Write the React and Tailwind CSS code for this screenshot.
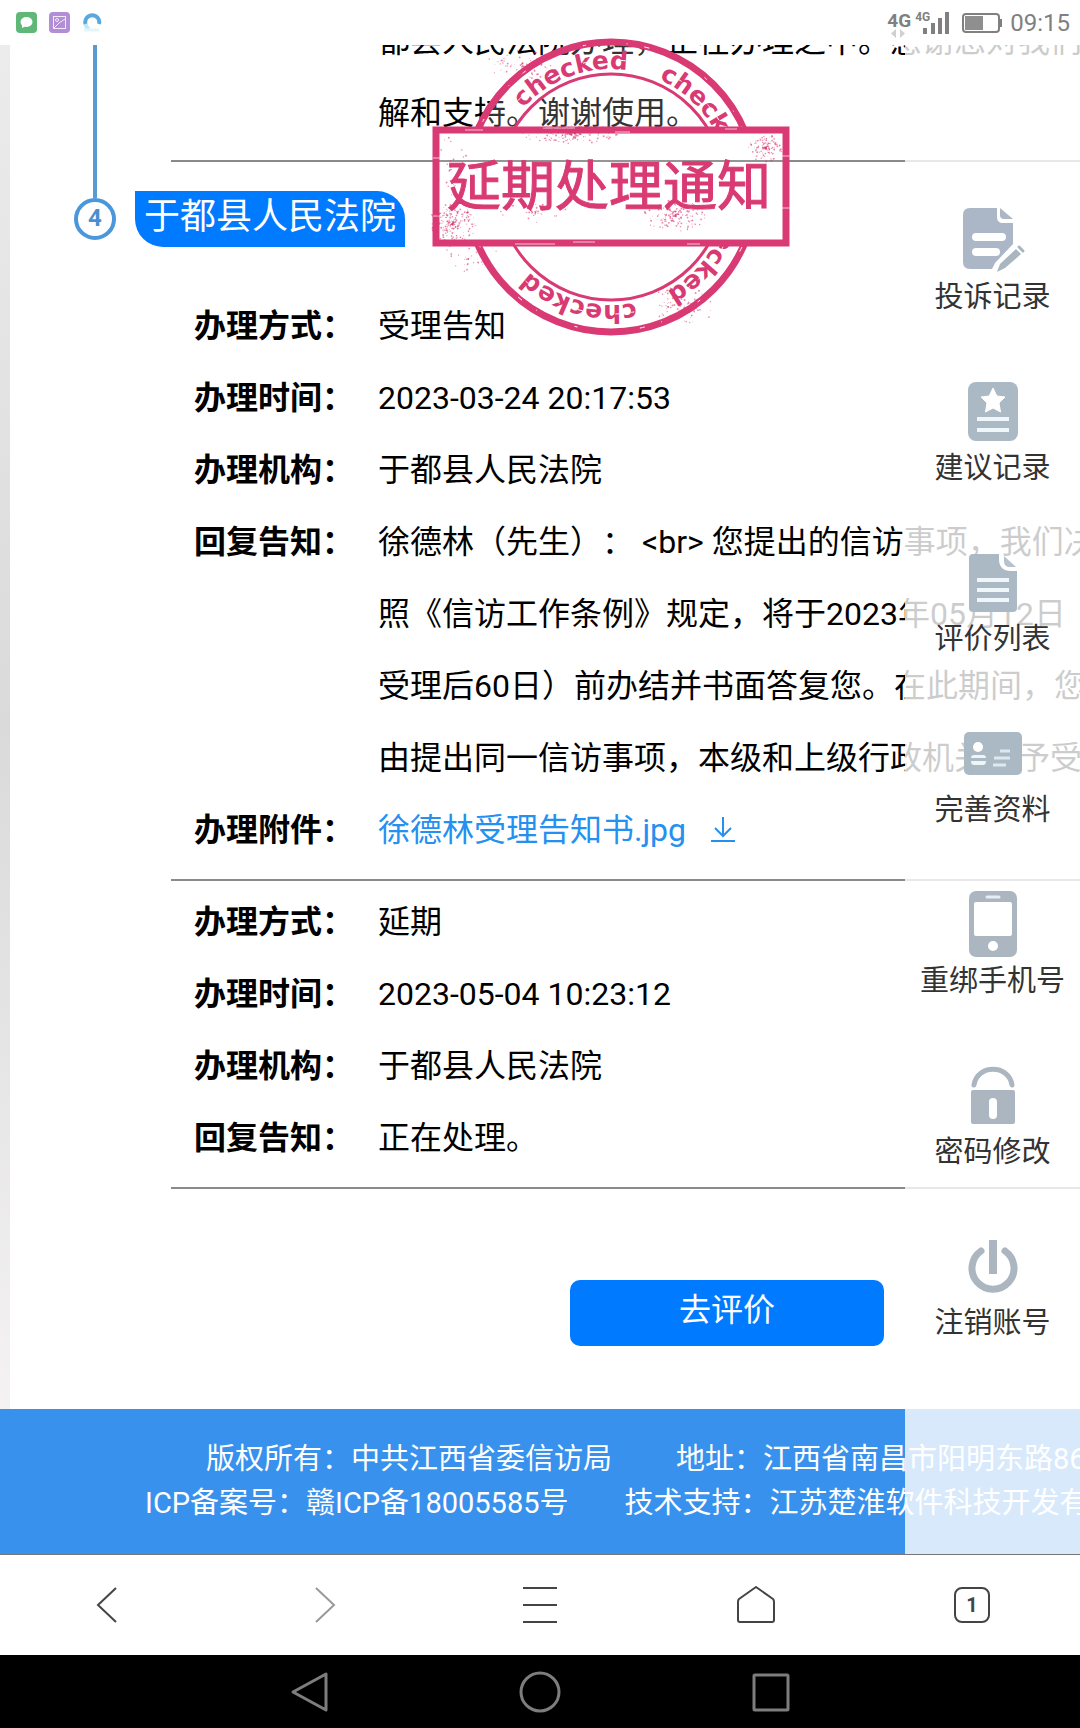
const previousReply = ["都县人民法院办理，正在办理之中。感谢您对我们", "解和支持。谢谢使用。"];

const records = [
  {
    id: "accept",
    method: "受理告知",
    time: "2023-03-24 20:17:53",
    org: "于都县人民法院",
    reply: [
      "徐德林（先生）： <br> 您提出的信访事项，我们决",
      "照《信访工作条例》规定，将于2023年05月12日",
      "受理后60日）前办结并书面答复您。在此期间，您",
      "由提出同一信访事项，本级和上级行政机关不予受",
    ],
    file: "徐德林受理告知书.jpg",
  },
  {
    id: "delay",
    method: "延期",
    time: "2023-05-04 10:23:12",
    org: "于都县人民法院",
    reply: ["正在处理。"],
  },
];

const menu = [
  {
    label: "投诉记录",
    icon: (
      <>
        <path
          d="M11 3H38V12Q38 18 44 18H54V39L36 58L33 64H11Q4 64 4 57V10Q4 3 11 3Z"
          fill="#abb6c6"
        />
        <path d="M41 3L54 14H45Q41 14 41 10Z" fill="#abb6c6" />
        <path d="M17 32H43M17 47H37" stroke="white" strokeWidth="8" strokeLinecap="round" />
        <path d="M38 67L41 59L57 44L62 49L46 63Z" fill="#a9b5bf" />
        <path d="M60 42L64 46" stroke="#a9b5bf" strokeWidth="3" strokeLinecap="round" />
      </>
    ),
  },
  {
    label: "建议记录",
    icon: (
      <>
        <rect x="9" y="6" width="50" height="59" rx="8" fill="#abb9c5" />
        <path
          d="M34 12L37.800 20L46 21L40 27L41.500 36L34 32L26.500 36L28 27L22 21L30.200 20Z"
          fill="white"
          stroke="white"
          strokeLinejoin="round"
        />
        <path d="M18 43H50M18 54H50" stroke="#f0f7fa" strokeWidth="4" />
      </>
    ),
  },
  {
    label: "评价列表",
    icon: (
      <>
        <path
          d="M14 7H40V12Q40 24 52 24H58V61Q58 65 54 65H14Q10 65 10 61V11Q10 7 14 7Z"
          fill="#abb9c5"
        />
        <path d="M45 9L57 20H51Q45 20 45 14Z" fill="#b7c2cc" />
        <path d="M18 33H50M18 43H50M18 53H50" stroke="#f0f7fa" strokeWidth="4" />
      </>
    ),
  },
  {
    label: "完善资料",
    icon: (
      <>
        <rect x="5" y="14" width="58" height="43" rx="5" fill="#abb9c5" />
        <circle cx="19" cy="29" r="5" fill="white" />
        <path d="M12 40Q12 37 15 37H24Q27 37 27 40ZM12 43H27Q27 47 24 47H15Q12 47 12 43Z" fill="#eef5f5" />
        <path d="M41 33H51M35 40H51M34 47H47" stroke="#dfe8ee" strokeWidth="3" />
      </>
    ),
  },
  {
    label: "重绑手机号",
    icon: (
      <>
        <rect x="10" y="2" width="48" height="66" rx="7" fill="#abb6c1" />
        <rect x="15" y="13" width="38" height="34" rx="2" fill="white" />
        <path d="M28 8H40" stroke="#e7edf2" strokeWidth="3" strokeLinecap="round" />
        <circle cx="34" cy="57" r="5" fill="white" />
      </>
    ),
  },
  {
    label: "密码修改",
    icon: (
      <>
        <path d="M15 25C18 4 50 4 53 25" fill="none" stroke="#abb6c1" strokeWidth="5" strokeLinecap="round" />
        <rect x="12" y="30" width="44" height="34" rx="2" fill="#abb6c1" />
        <path d="M34 42V55" stroke="white" strokeWidth="8" strokeLinecap="round" />
      </>
    ),
  },
  {
    label: "注销账号",
    icon: (
      <>
        <path
          d="M22 20A21 21 0 1 0 46 20"
          fill="none"
          stroke="#abb6c1"
          strokeWidth="7"
          strokeLinecap="round"
        />
        <path d="M34 9V43" stroke="#abb6c1" strokeWidth="8" />
      </>
    ),
  },
];

// ink spatter around the stamp: centre x, centre y, radius x, radius y, amount
const clusters = [
  [27, 194, 24, 20, 210],
  [340, 118, 17, 14, 120],
  [145, 104, 48, 10, 170],
  [250, 186, 32, 16, 150],
  [110, 182, 36, 12, 40],
  [98, 36, 40, 16, 70],
  [256, 276, 34, 20, 70],
  [44, 228, 30, 16, 30],
  [25, 140, 18, 40, 30],
];

function makeSpatter() {
  let seed = 7;
  const rand = () => {
    seed = (seed * 16807) % 2147483647;
    return seed / 2147483647;
  };
  return clusters.flatMap(([cx, cy, rx, ry, count]) =>
    Array.from({ length: count }, () => {
      const angle = rand() * Math.PI * 2;
      const dist = rand();
      return {
        x: cx + Math.cos(angle) * rx * dist,
        y: cy + Math.sin(angle) * ry * dist,
        r: 0.4 + rand() * 0.6,
      };
    })
  );
}

const spatter = makeSpatter();

function Stamp() {
  return (
    <svg
      viewBox="0 0 372 316"
      className="absolute left-[425px] top-[30px] w-[372px] h-[316px] pointer-events-none"
      fontFamily="'DejaVu Sans', sans-serif"
    >
      <defs>
        <path id="ring" d="M186 39A118 118 0 0 1 186 275A118 118 0 0 1 186 39" />
        <clipPath id="outside">
          <path d="M0 0H372V98H0ZM0 216H372V316H0Z" />
        </clipPath>
      </defs>
      <g clipPath="url(#outside)">
        <circle cx="186" cy="157" r="145" fill="white" fillOpacity="0.2" stroke="#d93a73" strokeWidth="7" />
        <circle cx="186" cy="157" r="113" fill="none" stroke="#d93a73" strokeWidth="3" />
        {[-48, 24, 96, 168].map((deg) => (
          <text
            key={deg}
            transform={`rotate(${deg} 186 157)`}
            fontSize="25"
            fontWeight="700"
            fill="#d93a73"
          >
            <textPath href="#ring">checked</textPath>
          </text>
        ))}
        <circle cx="186" cy="157" r="144" fill="none" stroke="white" strokeDasharray="3 41 1 17 5 63" />
        <circle cx="186" cy="157" r="127" fill="none" stroke="white" strokeDasharray="5 19 3 11" />
      </g>
      <rect x="11" y="100" width="350" height="113" fill="white" fillOpacity="0.1" stroke="#d93a73" strokeWidth="7" />
      <path d="M40 100H58M118 98H150M190 102H205M300 99H312M90 214H130M148 212H170M262 214H275" stroke="white" strokeOpacity="0.7" />
      <path d="M8 128H15M8 186H15M357 126H365M357 178H365" stroke="white" strokeOpacity="0.7" />
      <text
        x="184"
        y="176"
        textAnchor="middle"
        fontFamily="'Noto Sans CJK SC', sans-serif"
        fontSize="54"
        fill="#d93a73"
        stroke="#d93a73"
      >
        延期处理通知
      </text>
      {spatter.map((dot, i) => (
        <circle key={i} cx={dot.x} cy={dot.y} r={dot.r} fill="#d93a73" fillOpacity="0.6" />
      ))}
    </svg>
  );
}

function StatusBar() {
  return (
    <header className="h-[45px] shrink-0 flex items-center justify-between pl-4 pr-[10px] bg-white text-[#808080]">
      <div className="flex items-center gap-3">
        <svg width="21" height="21" viewBox="0 0 21 21">
          <rect width="21" height="21" rx="4" fill="#60b878" />
          <ellipse cx="10.500" cy="10" rx="6" ry="5" fill="white" />
          <path d="M6 12L6 16L10 14Z" fill="white" />
        </svg>
        <svg width="21" height="21" viewBox="0 0 21 21" fill="none" stroke="#f3e9fb">
          <rect width="21" height="21" rx="4" fill="#b18ed6" stroke="none" />
          <rect x="4.500" y="4.500" width="12" height="12" />
          <path d="M5 16L10 11L16 7" />
          <circle cx="8" cy="8" r="1.500" />
        </svg>
        <svg width="20" height="21" viewBox="0 0 20 21" fill="none">
          <path d="M3.500 12A7 7 0 0 0 7 17" stroke="#c4e8f2" strokeWidth="4" />
          <path d="M3.500 12A7 7 0 1 1 17 12" stroke="#5aa9de" strokeWidth="4" />
          <path d="M2 18H17" stroke="#e3f5f8" strokeWidth="3" />
        </svg>
      </div>
      <div className="flex items-center">
        <div className="relative flex items-start h-7">
          <span className="text-[19px] leading-6 font-bold">4G</span>
          <svg className="absolute left-1 top-5" width="14" height="9" viewBox="0 0 14 9" fill="#d0d0d0">
            <path d="M5 0V9L0 4.500ZM9 0V9L14 4.500Z" />
          </svg>
          <span className="ml-1 text-[12px] leading-4 font-bold">4G</span>
        </div>
        <svg className="-ml-2 mr-3" width="28" height="24" viewBox="0 0 28 24" fill="#808080">
          <rect x="1" y="17" width="4" height="6" />
          <rect x="9" y="12" width="4" height="11" />
          <rect x="16" y="7" width="4" height="16" />
          <rect x="23" y="1" width="4" height="22" />
        </svg>
        <svg width="40" height="20" viewBox="0 0 40 20">
          <rect x="1" y="1" width="36" height="18" rx="3" fill="none" stroke="#808080" strokeWidth="2" />
          <rect x="3" y="3" width="18" height="14" fill="#8f8f8f" />
          <rect x="38" y="6" width="2" height="8" fill="#808080" />
        </svg>
        <time className="ml-2 text-2xl">09:15</time>
      </div>
    </header>
  );
}

function Row({ label, children }) {
  return (
    <div className="flex">
      <dt className="w-[184px] shrink-0 font-bold">{label}：</dt>
      <dd className="whitespace-nowrap">{children}</dd>
    </div>
  );
}

export default function App() {
  return (
    <div className="relative min-h-screen flex flex-col overflow-hidden bg-white text-black font-[Roboto,'Noto_Sans_CJK_SC',sans-serif] [text-spacing-trim:space-all]">
      <StatusBar />

      <main className="relative flex-1 flex flex-col overflow-hidden">
        <div className="flex-1 flex">
          <div className="w-[10px] shrink-0 bg-linear-to-b from-[#ececec] via-[#dadada] to-[#f4f2f3]" />

          <div className="ml-16 w-[42px] shrink-0 flex flex-col items-center">
            <div className="w-1 h-[153px] bg-[#569bd6]" />
            <span className="size-[42px] rounded-full border-4 border-[#4a97dc] text-[#4a8fd0] text-2xl leading-8 font-bold text-center">
              4
            </span>
          </div>

          <div className="ml-[19px] flex-1 min-w-0 text-[32px] leading-[72px]">
            <div className="-mt-10 ml-9 pl-[207px] pb-[11px] border-b-2 border-[#8a8a8a]">
              {previousReply.map((line) => (
                <p key={line} className="whitespace-nowrap">
                  {line}
                </p>
              ))}
            </div>

            <h2 className="mt-[29px] w-fit px-[9px] pb-1 rounded-tr-[28px] rounded-bl-[28px] bg-[#007aff] text-white text-4xl leading-[52px]">
              于都县人民法院
            </h2>

            <div className="mt-[38px] ml-9">
              {records.map((record) => (
                <dl key={record.id} className="pt-[5px] pl-[23px] pb-[13px] border-b-2 border-[#8a8a8a]">
                  <Row label="办理方式">{record.method}</Row>
                  <Row label="办理时间">{record.time}</Row>
                  <Row label="办理机构">{record.org}</Row>
                  <Row label="回复告知">
                    {record.reply.map((line) => (
                      <p key={line}>{line}</p>
                    ))}
                  </Row>
                  {record.file && (
                    <Row label="办理附件">
                      <a href="#file" className="flex items-center text-[#2590f0]">
                        {record.file}
                        <svg
                          className="ml-6"
                          width="26"
                          height="28"
                          viewBox="0 0 26 28"
                          fill="none"
                          stroke="currentColor"
                          strokeWidth="2"
                        >
                          <path d="M13 1V20M5 12L13 20L21 12M1 25H25" />
                        </svg>
                      </a>
                    </Row>
                  )}
                </dl>
              ))}
            </div>

            <div className="mt-[91px] mb-[62px] pr-[196px] flex justify-end">
              <button
                type="button"
                className="w-[314px] pt-2 pb-3.5 rounded-[10px] bg-[#007aff] text-white leading-[44px] cursor-pointer"
              >
                去评价
              </button>
            </div>
          </div>
        </div>

        <footer className="pt-7 pb-[29px] bg-[#3891ed] text-white text-[29px] leading-[44px] whitespace-nowrap">
          <p className="pl-[206px] flex gap-16">
            <span>版权所有：中共江西省委信访局</span>
            <span>地址：江西省南昌市阳明东路86号</span>
          </p>
          <p className="pl-[145px] flex gap-14">
            <span>ICP备案号：赣ICP备18005585号</span>
            <span>技术支持：江苏楚淮软件科技开发有</span>
          </p>
        </footer>

        <nav className="absolute inset-y-0 right-0 w-[175px] pt-40 flex flex-col gap-[55px] bg-white/80 text-[#333] text-[29px] leading-[48px]">
          {menu.map((item) => (
            <a key={item.label} href="#menu" className="flex flex-col items-center whitespace-nowrap">
              <svg width="68" height="68" viewBox="0 0 68 68">
                {item.icon}
              </svg>
              {item.label}
            </a>
          ))}
        </nav>
      </main>

      <nav className="h-[101px] shrink-0 grid grid-cols-5 border-t border-[#777] bg-white text-[#444]">
        <button type="button" aria-label="后退" className="flex items-center justify-center">
          <svg width="38" height="38" viewBox="0 0 38 38" fill="none" stroke="currentColor" strokeWidth="2">
            <path d="M27 2L9 19L27 36" />
          </svg>
        </button>
        <button type="button" aria-label="前进" className="flex items-center justify-center text-[#999]">
          <svg width="38" height="38" viewBox="0 0 38 38" fill="none" stroke="currentColor" strokeWidth="2">
            <path d="M11 2L29 19L11 36" />
          </svg>
        </button>
        <button type="button" aria-label="菜单" className="flex items-center justify-center">
          <svg width="38" height="38" viewBox="0 0 38 38" fill="none" stroke="currentColor" strokeWidth="2">
            <path d="M2 2H36M2 19H36M2 36H36" />
          </svg>
        </button>
        <button type="button" aria-label="主页" className="flex items-center justify-center">
          <svg
            width="38"
            height="38"
            viewBox="0 0 38 38"
            fill="none"
            stroke="currentColor"
            strokeWidth="2"
            strokeLinejoin="round"
          >
            <path d="M19 1L36 13Q37 14 37 16V34Q37 36 35 36H3Q1 36 1 34V16Q1 14 2 13Z" />
          </svg>
        </button>
        <button type="button" aria-label="标签页" className="flex items-center justify-center">
          <span className="size-9 rounded-lg border-2 border-current text-xl leading-8 font-bold">1</span>
        </button>
      </nav>

      <div className="h-[73px] shrink-0 flex items-center justify-center gap-[190px] bg-black text-[#7d7d7d]">
        <button type="button" aria-label="返回">
          <svg width="40" height="42" viewBox="0 0 40 42" fill="none" stroke="currentColor" strokeWidth="3" strokeLinejoin="round">
            <path d="M37 3V39L4 21Z" />
          </svg>
        </button>
        <button type="button" aria-label="主屏幕">
          <svg width="42" height="42" viewBox="0 0 42 42" fill="none" stroke="currentColor" strokeWidth="3">
            <circle cx="21" cy="21" r="19" />
          </svg>
        </button>
        <button type="button" aria-label="最近任务">
          <svg width="40" height="42" viewBox="0 0 40 42" fill="none" stroke="currentColor" strokeWidth="3">
            <rect x="3" y="4" width="34" height="35" rx="1" />
          </svg>
        </button>
      </div>

      <Stamp />
    </div>
  );
}
